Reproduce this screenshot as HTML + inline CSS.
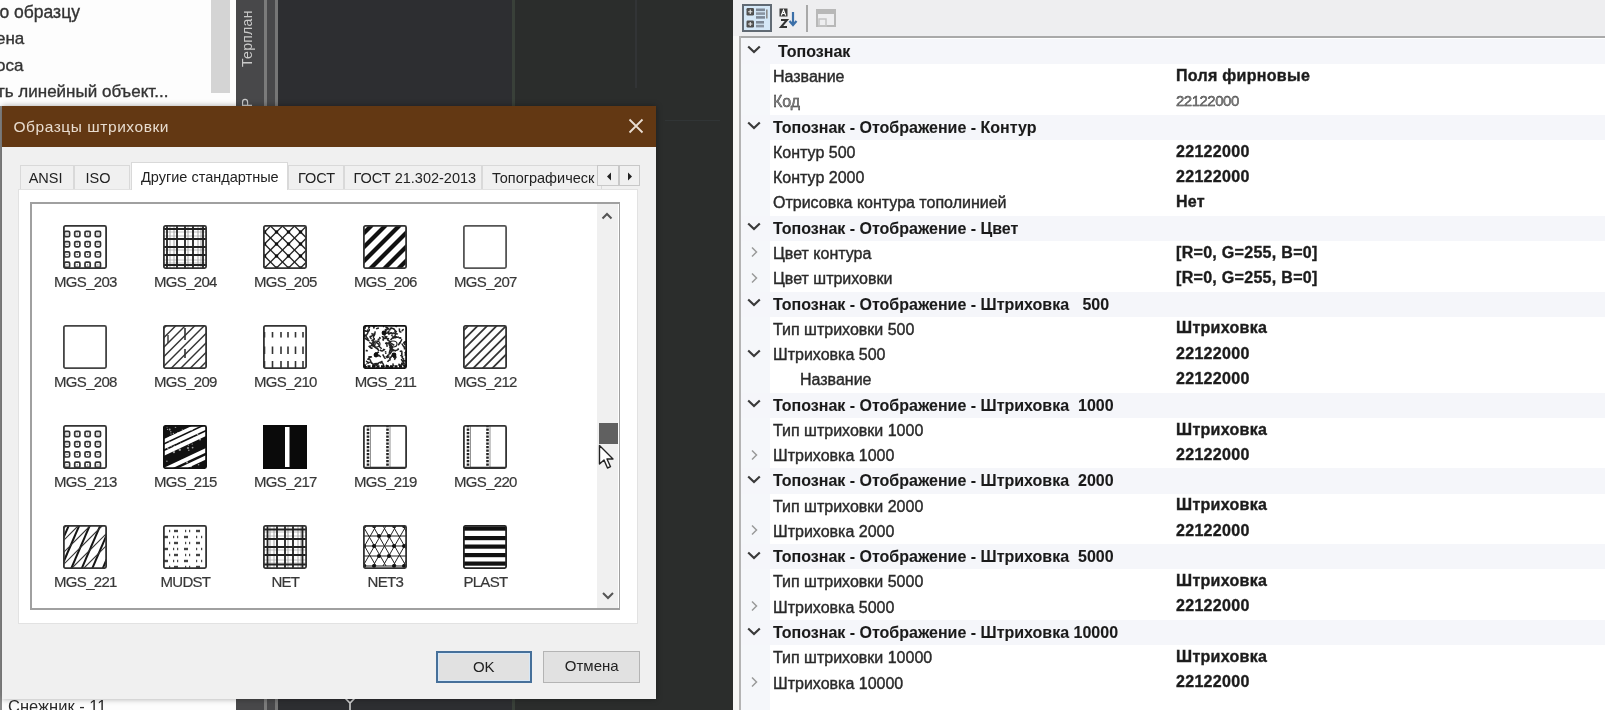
<!DOCTYPE html>
<html><head><meta charset="utf-8">
<style>
*{box-sizing:border-box;margin:0;padding:0}
html,body{width:1605px;height:710px;overflow:hidden;background:#2d2f31;font-family:"Liberation Sans",sans-serif;position:relative}
#wrap{position:absolute;left:0;top:0;width:1605px;height:710px;overflow:hidden;filter:blur(0.45px)}
.a{position:absolute}
.t{position:absolute;white-space:nowrap}
/* left panel */
#lp{left:0;top:0;width:236px;height:710px;background:#fdfdfd}
#lpsb{left:211px;top:0;width:19px;height:93px;background:#d4d4d4}
#lptxt div{position:absolute;left:-3px;font-size:17px;color:#333;-webkit-text-stroke:0.35px #333;white-space:nowrap}
#strip{left:236px;top:0;width:42px;height:710px;background:#48484a}
#canvas{left:278px;top:0;width:455px;height:710px;background:linear-gradient(90deg,#2d2e31 0,#2d2e31 234px,#2b2d2c 234px)}
/* property panel */
#rs{left:733px;top:0;width:7px;height:710px;background:#f6f6f6}
#pp{left:740px;top:0;width:865px;height:710px;background:#fff}
#tb{left:733px;top:0;width:872px;height:36px;background:#eeeef0}
.row{position:absolute;left:741px;width:864px;height:25.27px;line-height:25.27px;font-size:16px;color:#2a2a2a;-webkit-text-stroke:0.4px #2a2a2a}
.row.cat{background:#f5f6fa;font-weight:bold;color:#1a1a1a;-webkit-text-stroke:0.1px #1a1a1a}
.nm{position:absolute;left:32px;top:0;white-space:nowrap}
.val{position:absolute;left:435px;top:-1.3px;white-space:nowrap;font-weight:bold;color:#1a1a1a;letter-spacing:0.3px}
.chev{position:absolute;left:6px;top:6.5px;width:14px;height:10px}
/* dialog */
#dlg{left:2px;top:106px;width:654px;height:592.5px;background:#f0f0f0;box-shadow:0 0 6px rgba(0,0,0,.35)}
#title{left:0;top:0;width:654px;height:41px;background:#633813}
#ttext{left:11.5px;top:12px;font-size:15.5px;color:#e8dccf;letter-spacing:0.55px}
.tab{position:absolute;top:59px;height:24px;background:#f0f0f0;border:1px solid #d9d9d9;border-bottom:none;font-size:14.5px;color:#222;line-height:25px;text-align:left}
.tab.sel{top:56px;height:28px;background:#fff;line-height:28px;border-color:#d9d9d9}
#page{left:16px;top:83px;width:620px;height:435px;background:#fff;border:1px solid #e2e2e2}
#lb{left:28px;top:96px;width:590px;height:408px;background:#fff;border:1px solid #a0a0a0;border-width:2px 1px 2px 2px}
#sb{left:595px;top:98px;width:21px;height:404px;background:#f0f0f0}
.it{position:absolute;width:100px;height:100px}
.it svg{position:absolute;left:33px;top:0}
.it .lbl{position:absolute;left:5px;width:100px;top:48.6px;line-height:16px;text-align:center;font-size:15px;letter-spacing:-0.7px;color:#383838;-webkit-text-stroke:0.2px #383838}
.btn{position:absolute;top:545px;height:32px;background:#e1e1e1;border:1px solid #b4b4b4;font-size:15px;color:#222;text-align:center;line-height:28px}
.spin{background:#f0f0f0;border:1px solid #c8c8c8}
</style></head><body><div id="wrap">
<div id="lp" class="a"></div>
<div id="lpsb" class="a"></div>
<div id="lptxt" class="a" style="left:0;top:0">
  <div style="top:2px;left:-0.5px;font-size:17.5px">о образцу</div>
  <div style="top:29px;left:-4px">ена</div>
  <div style="top:55.5px;left:-4px">оса</div>
  <div style="top:82px">ть линейный объект...</div>
</div>
<div id="strip" class="a"></div>
<div class="a" style="left:264px;top:0;width:3px;height:710px;background:#7b7b7b"></div>
<div class="a" style="left:275px;top:0;width:3px;height:710px;background:#767676"></div>
<div class="t" style="left:238.5px;top:67px;transform:rotate(-90deg);transform-origin:0 0;font-size:14px;color:#c9c9c9;letter-spacing:0.3px">Терплан</div>
<div class="t" style="left:238.5px;top:150px;transform:rotate(-90deg);transform-origin:0 0;font-size:14px;color:#c9c9c9;width:52px;text-align:right">ЦМР</div>
<div id="canvas" class="a"></div>
<div class="a" style="left:512px;top:0;width:2.5px;height:710px;background:#394039"></div>
<div class="a" style="left:634.5px;top:0;width:2px;height:88px;background:#323436"></div>
<div class="a" style="left:665px;top:120px;width:55px;height:1px;background:#313536"></div>
<svg class="a" style="left:343px;top:697px" width="14" height="14" viewBox="0 0 14 14"><path d="M2 1L7 6L12 1M7 6V14" fill="none" stroke="#cfcfcf" stroke-width="1.6"/></svg>
<div class="t" style="left:8px;top:697px;font-size:16.5px;color:#2a2a2a">Снежник - 11</div>
<div class="a" style="left:0;top:106px;width:2px;height:604px;background:#8a8a8a"></div>
<div id="rs" class="a"></div>
<div id="pp" class="a"></div>
<div id="tb" class="a"></div>
<div class="a" style="left:742px;top:4px;width:30px;height:28px;background:#d5e8f8;border:2px solid #616a74"></div>
<svg class="a" style="left:745px;top:7px" width="24" height="22" viewBox="0 0 24 22"><rect x="1.5" y="1" width="7.5" height="7.5" rx="1.2" fill="#505050"/><path d="M5.25 2.6v4.3M3.1 4.75h4.3" stroke="#e8e8e8" stroke-width="1.1"/><rect x="1.5" y="13.5" width="7.5" height="7" rx="1.2" fill="#505050"/><path d="M3.1 17h4.3M5.25 14.9v4.2" stroke="#e8e8e8" stroke-width="1.1"/><rect x="11" y="1.5" width="9" height="2.6" fill="#7d8896"/><rect x="11" y="5.3" width="9" height="2.6" fill="#8a95a2"/><rect x="11" y="9.1" width="9" height="2.6" fill="#7d8896"/><rect x="11" y="14" width="8" height="2.6" fill="#7d8896"/><rect x="11" y="17.8" width="8" height="2.6" fill="#8a95a2"/><rect x="21" y="2.5" width="1.6" height="9" fill="#8c8c8c"/></svg>
<svg class="a" style="left:777px;top:8px" width="22" height="21" viewBox="0 0 22 21"><rect x="2.5" y="0.5" width="8" height="8" fill="#3a3a3a"/><path d="M4.3 7.5L6.5 2L8.7 7.5M5.2 5.5h2.6" fill="none" stroke="#fff" stroke-width="1.2"/><path d="M4 12h6L4 19h6" fill="none" stroke="#333" stroke-width="2"/><path d="M16 4v13M12.5 13l3.5 4l3.5-4" fill="none" stroke="#3b6fa8" stroke-width="2.2"/></svg>
<div class="a" style="left:806px;top:5px;width:1.5px;height:27px;background:#a8a8a8"></div>
<svg class="a" style="left:816px;top:9px" width="22" height="19" viewBox="0 0 22 19"><rect x="1" y="1" width="18" height="16" fill="none" stroke="#b8b8b8" stroke-width="2"/><rect x="1" y="1" width="18" height="4" fill="#b8b8b8"/><rect x="3" y="10" width="7" height="7" fill="none" stroke="#c4c4c4" stroke-width="1.5"/></svg>
<div class="a" style="left:740px;top:36px;width:865px;height:2px;background:#a9a9a9"></div>
<div class="a" style="left:739px;top:36px;width:1.5px;height:674px;background:#b4b4b4"></div>
<div class="a" style="left:741px;top:38px;width:29px;height:672px;background:#f5f7fa"></div>
<div id="grid2">
<div class="row cat" style="top:38.80px"><svg class="chev" viewBox="0 0 14 10"><path d="M1.2 1.5L7 7L12.8 1.5" fill="none" stroke="#3a3a3a" stroke-width="2.2"/></svg><span class="nm" style="left:37px">Топознак</span></div>
<div class="row" style="top:64.07px"><span class="nm">Название</span><span class="val">Поля фирновые</span></div>
<div class="row" style="top:89.34px"><span class="nm" style="color:#8a8a8a">Код</span><span class="val" style="font-weight:normal;color:#8a8a8a;letter-spacing:-0.5px;font-size:15px">22122000</span></div>
<div class="row cat" style="top:114.61px"><svg class="chev" viewBox="0 0 14 10"><path d="M1.2 1.5L7 7L12.8 1.5" fill="none" stroke="#3a3a3a" stroke-width="2.2"/></svg><span class="nm">Топознак - Отображение - Контур</span></div>
<div class="row" style="top:139.88px"><span class="nm">Контур 500</span><span class="val">22122000</span></div>
<div class="row" style="top:165.15px"><span class="nm">Контур 2000</span><span class="val">22122000</span></div>
<div class="row" style="top:190.42px"><span class="nm">Отрисовка контура тополинией</span><span class="val">Нет</span></div>
<div class="row cat" style="top:215.69px"><svg class="chev" viewBox="0 0 14 10"><path d="M1.2 1.5L7 7L12.8 1.5" fill="none" stroke="#3a3a3a" stroke-width="2.2"/></svg><span class="nm">Топознак - Отображение - Цвет</span></div>
<div class="row" style="top:240.96px"><svg class="chev" viewBox="0 0 14 10"><path d="M5 0.5L9.5 5L5 9.5" fill="none" stroke="#9a9a9a" stroke-width="1.5"/></svg><span class="nm">Цвет контура</span><span class="val">[R=0, G=255, B=0]</span></div>
<div class="row" style="top:266.23px"><svg class="chev" viewBox="0 0 14 10"><path d="M5 0.5L9.5 5L5 9.5" fill="none" stroke="#9a9a9a" stroke-width="1.5"/></svg><span class="nm">Цвет штриховки</span><span class="val">[R=0, G=255, B=0]</span></div>
<div class="row cat" style="top:291.50px"><svg class="chev" viewBox="0 0 14 10"><path d="M1.2 1.5L7 7L12.8 1.5" fill="none" stroke="#3a3a3a" stroke-width="2.2"/></svg><span class="nm">Топознак - Отображение - Штриховка&nbsp;&nbsp; 500</span></div>
<div class="row" style="top:316.77px"><span class="nm">Тип штриховки 500</span><span class="val">Штриховка</span></div>
<div class="row" style="top:342.04px"><svg class="chev" viewBox="0 0 14 10"><path d="M1.2 1.5L7 7L12.8 1.5" fill="none" stroke="#3a3a3a" stroke-width="2.2"/></svg><span class="nm">Штриховка 500</span><span class="val">22122000</span></div>
<div class="row" style="top:367.31px"><span class="nm" style="left:59px">Название</span><span class="val">22122000</span></div>
<div class="row cat" style="top:392.58px"><svg class="chev" viewBox="0 0 14 10"><path d="M1.2 1.5L7 7L12.8 1.5" fill="none" stroke="#3a3a3a" stroke-width="2.2"/></svg><span class="nm">Топознак - Отображение - Штриховка&nbsp; 1000</span></div>
<div class="row" style="top:417.85px"><span class="nm">Тип штриховки 1000</span><span class="val">Штриховка</span></div>
<div class="row" style="top:443.12px"><svg class="chev" viewBox="0 0 14 10"><path d="M5 0.5L9.5 5L5 9.5" fill="none" stroke="#9a9a9a" stroke-width="1.5"/></svg><span class="nm">Штриховка 1000</span><span class="val">22122000</span></div>
<div class="row cat" style="top:468.39px"><svg class="chev" viewBox="0 0 14 10"><path d="M1.2 1.5L7 7L12.8 1.5" fill="none" stroke="#3a3a3a" stroke-width="2.2"/></svg><span class="nm">Топознак - Отображение - Штриховка&nbsp; 2000</span></div>
<div class="row" style="top:493.66px"><span class="nm">Тип штриховки 2000</span><span class="val">Штриховка</span></div>
<div class="row" style="top:518.93px"><svg class="chev" viewBox="0 0 14 10"><path d="M5 0.5L9.5 5L5 9.5" fill="none" stroke="#9a9a9a" stroke-width="1.5"/></svg><span class="nm">Штриховка 2000</span><span class="val">22122000</span></div>
<div class="row cat" style="top:544.20px"><svg class="chev" viewBox="0 0 14 10"><path d="M1.2 1.5L7 7L12.8 1.5" fill="none" stroke="#3a3a3a" stroke-width="2.2"/></svg><span class="nm">Топознак - Отображение - Штриховка&nbsp; 5000</span></div>
<div class="row" style="top:569.47px"><span class="nm">Тип штриховки 5000</span><span class="val">Штриховка</span></div>
<div class="row" style="top:594.74px"><svg class="chev" viewBox="0 0 14 10"><path d="M5 0.5L9.5 5L5 9.5" fill="none" stroke="#9a9a9a" stroke-width="1.5"/></svg><span class="nm">Штриховка 5000</span><span class="val">22122000</span></div>
<div class="row cat" style="top:620.01px"><svg class="chev" viewBox="0 0 14 10"><path d="M1.2 1.5L7 7L12.8 1.5" fill="none" stroke="#3a3a3a" stroke-width="2.2"/></svg><span class="nm">Топознак - Отображение - Штриховка 10000</span></div>
<div class="row" style="top:645.28px"><span class="nm">Тип штриховки 10000</span><span class="val">Штриховка</span></div>
<div class="row" style="top:670.55px"><svg class="chev" viewBox="0 0 14 10"><path d="M5 0.5L9.5 5L5 9.5" fill="none" stroke="#9a9a9a" stroke-width="1.5"/></svg><span class="nm">Штриховка 10000</span><span class="val">22122000</span></div>
</div>


<div id="dlg" class="a">
  <div id="title" class="a"><span id="ttext" class="t">Образцы штриховки</span>
    <svg class="a" style="left:626px;top:11.5px" width="16" height="16" viewBox="0 0 16 16"><path d="M1.5 1.5L14.5 14.5M14.5 1.5L1.5 14.5" stroke="#e9ddd2" stroke-width="1.8"/></svg>
  </div>
  <div class="tab" style="left:17.7px;width:54.3px;padding-left:8px">ANSI</div>
  <div class="tab" style="left:72px;width:55.6px;padding-left:10.5px">ISO</div>
  <div class="tab" style="left:286px;width:56px;padding-left:9px">ГОСТ</div>
  <div class="tab" style="left:342px;width:138.4px;padding-left:8.5px">ГОСТ 21.302-2013</div>
  <div class="tab" style="left:480px;width:120px;text-align:left;padding-left:9px;overflow:hidden">Топографическ</div>
  <div id="page" class="a"></div>
  <div class="tab sel" style="left:128.8px;width:157.6px;padding-left:9.2px">Другие стандартные</div>
  <div class="a spin" style="left:595px;top:59px;width:22px;height:21px"><svg width="22" height="21"><path d="M13 6.5L9 10.5L13 14.5Z" fill="#222"/></svg></div>
  <div class="a spin" style="left:617px;top:59px;width:21px;height:21px"><svg width="21" height="21"><path d="M8 6.5L12 10.5L8 14.5Z" fill="#222"/></svg></div>
  <div id="lb" class="a"></div>
  <div id="sb" class="a">
    <svg class="a" style="left:3px;top:7px" width="14" height="10"><path d="M2.5 7.5L7 3L11.5 7.5" fill="none" stroke="#555" stroke-width="2"/></svg>
    <svg class="a" style="left:4px;top:387px" width="14" height="10"><path d="M2 2L7 7L12 2" fill="none" stroke="#555" stroke-width="2"/></svg>
    <div class="a" style="left:2px;top:219px;width:19px;height:21px;background:#606060"></div>
  </div>
  <div class="a" id="grid" style="left:28.4px;top:119.2px">
<div class="it" style="left:0px;top:0px"><svg width="44" height="44" viewBox="0 0 44 44"><rect x="0" y="0" width="44" height="44" fill="#fff"/><clipPath id="c203"><rect x="1" y="1" width="42" height="42"/></clipPath><g clip-path="url(#c203)"><rect x="1.4" y="6.4" width="5.2" height="5.2" rx="1.2" fill="none" stroke="#333" stroke-width="1.7"/><circle cx="4" cy="9" r="0.6" fill="#555"/><rect x="1.4" y="16.599999999999998" width="5.2" height="5.2" rx="1.2" fill="none" stroke="#333" stroke-width="1.7"/><circle cx="4" cy="19.2" r="0.6" fill="#555"/><rect x="1.4" y="26.799999999999997" width="5.2" height="5.2" rx="1.2" fill="none" stroke="#333" stroke-width="1.7"/><circle cx="4" cy="29.4" r="0.6" fill="#555"/><rect x="1.4" y="37.199999999999996" width="5.2" height="5.2" rx="1.2" fill="none" stroke="#333" stroke-width="1.7"/><circle cx="4" cy="39.8" r="0.6" fill="#555"/><rect x="11.700000000000001" y="6.4" width="5.2" height="5.2" rx="1.2" fill="none" stroke="#333" stroke-width="1.7"/><circle cx="14.3" cy="9" r="0.6" fill="#555"/><rect x="11.700000000000001" y="16.599999999999998" width="5.2" height="5.2" rx="1.2" fill="none" stroke="#333" stroke-width="1.7"/><circle cx="14.3" cy="19.2" r="0.6" fill="#555"/><rect x="11.700000000000001" y="26.799999999999997" width="5.2" height="5.2" rx="1.2" fill="none" stroke="#333" stroke-width="1.7"/><circle cx="14.3" cy="29.4" r="0.6" fill="#555"/><rect x="11.700000000000001" y="37.199999999999996" width="5.2" height="5.2" rx="1.2" fill="none" stroke="#333" stroke-width="1.7"/><circle cx="14.3" cy="39.8" r="0.6" fill="#555"/><rect x="22.0" y="6.4" width="5.2" height="5.2" rx="1.2" fill="none" stroke="#333" stroke-width="1.7"/><circle cx="24.6" cy="9" r="0.6" fill="#555"/><rect x="22.0" y="16.599999999999998" width="5.2" height="5.2" rx="1.2" fill="none" stroke="#333" stroke-width="1.7"/><circle cx="24.6" cy="19.2" r="0.6" fill="#555"/><rect x="22.0" y="26.799999999999997" width="5.2" height="5.2" rx="1.2" fill="none" stroke="#333" stroke-width="1.7"/><circle cx="24.6" cy="29.4" r="0.6" fill="#555"/><rect x="22.0" y="37.199999999999996" width="5.2" height="5.2" rx="1.2" fill="none" stroke="#333" stroke-width="1.7"/><circle cx="24.6" cy="39.8" r="0.6" fill="#555"/><rect x="32.3" y="6.4" width="5.2" height="5.2" rx="1.2" fill="none" stroke="#333" stroke-width="1.7"/><circle cx="34.9" cy="9" r="0.6" fill="#555"/><rect x="32.3" y="16.599999999999998" width="5.2" height="5.2" rx="1.2" fill="none" stroke="#333" stroke-width="1.7"/><circle cx="34.9" cy="19.2" r="0.6" fill="#555"/><rect x="32.3" y="26.799999999999997" width="5.2" height="5.2" rx="1.2" fill="none" stroke="#333" stroke-width="1.7"/><circle cx="34.9" cy="29.4" r="0.6" fill="#555"/><rect x="32.3" y="37.199999999999996" width="5.2" height="5.2" rx="1.2" fill="none" stroke="#333" stroke-width="1.7"/><circle cx="34.9" cy="39.8" r="0.6" fill="#555"/></g><rect x="0.9" y="0.9" width="42.2" height="42.2" rx="1.5" fill="none" stroke="#333" stroke-width="1.8"/></svg><div class="lbl">MGS_203</div></div>
<div class="it" style="left:100px;top:0px"><svg width="44" height="44" viewBox="0 0 44 44"><rect x="0" y="0" width="44" height="44" fill="#fff"/><clipPath id="c204"><rect x="1" y="1" width="42" height="42"/></clipPath><g clip-path="url(#c204)"><line x1="7" y1="0" x2="7" y2="44" stroke="#999" stroke-width="0.9"/><line x1="0" y1="7" x2="44" y2="7" stroke="#aaa" stroke-width="0.7"/><line x1="11" y1="0" x2="11" y2="44" stroke="#999" stroke-width="0.9"/><line x1="0" y1="11" x2="44" y2="11" stroke="#aaa" stroke-width="0.7"/><line x1="25" y1="0" x2="25" y2="44" stroke="#999" stroke-width="0.9"/><line x1="0" y1="25" x2="44" y2="25" stroke="#aaa" stroke-width="0.7"/><line x1="35" y1="0" x2="35" y2="44" stroke="#999" stroke-width="0.9"/><line x1="0" y1="35" x2="44" y2="35" stroke="#aaa" stroke-width="0.7"/><line x1="38" y1="0" x2="38" y2="44" stroke="#999" stroke-width="0.9"/><line x1="0" y1="38" x2="44" y2="38" stroke="#aaa" stroke-width="0.7"/><line x1="4" y1="0" x2="4" y2="44" stroke="#222" stroke-width="1.8"/><line x1="0" y1="4" x2="44" y2="4" stroke="#222" stroke-width="1.8"/><line x1="14" y1="0" x2="14" y2="44" stroke="#222" stroke-width="1.8"/><line x1="0" y1="14" x2="44" y2="14" stroke="#222" stroke-width="1.8"/><line x1="22" y1="0" x2="22" y2="44" stroke="#222" stroke-width="1.8"/><line x1="0" y1="22" x2="44" y2="22" stroke="#222" stroke-width="1.8"/><line x1="30" y1="0" x2="30" y2="44" stroke="#222" stroke-width="1.8"/><line x1="0" y1="30" x2="44" y2="30" stroke="#222" stroke-width="1.8"/><line x1="40" y1="0" x2="40" y2="44" stroke="#222" stroke-width="1.8"/><line x1="0" y1="40" x2="44" y2="40" stroke="#222" stroke-width="1.8"/></g><rect x="0.9" y="0.9" width="42.2" height="42.2" rx="1.5" fill="none" stroke="#333" stroke-width="1.8"/></svg><div class="lbl">MGS_204</div></div>
<div class="it" style="left:200px;top:0px"><svg width="44" height="44" viewBox="0 0 44 44"><rect x="0" y="0" width="44" height="44" fill="#fff"/><clipPath id="c205"><rect x="1" y="1" width="42" height="42"/></clipPath><g clip-path="url(#c205)"><line x1="-101.5" y1="50" x2="-51.5" y2="0" stroke="#222" stroke-width="1.3"/><line x1="-65.5" y1="0" x2="-15.5" y2="50" stroke="#222" stroke-width="1.3"/><line x1="-89.5" y1="50" x2="-39.5" y2="0" stroke="#222" stroke-width="1.3"/><line x1="-53.5" y1="0" x2="-3.5" y2="50" stroke="#222" stroke-width="1.3"/><line x1="-77.5" y1="50" x2="-27.5" y2="0" stroke="#222" stroke-width="1.3"/><line x1="-41.5" y1="0" x2="8.5" y2="50" stroke="#222" stroke-width="1.3"/><line x1="-65.5" y1="50" x2="-15.5" y2="0" stroke="#222" stroke-width="1.3"/><line x1="-29.5" y1="0" x2="20.5" y2="50" stroke="#222" stroke-width="1.3"/><line x1="-53.5" y1="50" x2="-3.5" y2="0" stroke="#222" stroke-width="1.3"/><line x1="-17.5" y1="0" x2="32.5" y2="50" stroke="#222" stroke-width="1.3"/><line x1="-41.5" y1="50" x2="8.5" y2="0" stroke="#222" stroke-width="1.3"/><line x1="-5.5" y1="0" x2="44.5" y2="50" stroke="#222" stroke-width="1.3"/><line x1="-29.5" y1="50" x2="20.5" y2="0" stroke="#222" stroke-width="1.3"/><line x1="6.5" y1="0" x2="56.5" y2="50" stroke="#222" stroke-width="1.3"/><line x1="-17.5" y1="50" x2="32.5" y2="0" stroke="#222" stroke-width="1.3"/><line x1="18.5" y1="0" x2="68.5" y2="50" stroke="#222" stroke-width="1.3"/><line x1="-5.5" y1="50" x2="44.5" y2="0" stroke="#222" stroke-width="1.3"/><line x1="30.5" y1="0" x2="80.5" y2="50" stroke="#222" stroke-width="1.3"/><line x1="6.5" y1="50" x2="56.5" y2="0" stroke="#222" stroke-width="1.3"/><line x1="42.5" y1="0" x2="92.5" y2="50" stroke="#222" stroke-width="1.3"/><line x1="18.5" y1="50" x2="68.5" y2="0" stroke="#222" stroke-width="1.3"/><line x1="54.5" y1="0" x2="104.5" y2="50" stroke="#222" stroke-width="1.3"/><line x1="30.5" y1="50" x2="80.5" y2="0" stroke="#222" stroke-width="1.3"/><line x1="66.5" y1="0" x2="116.5" y2="50" stroke="#222" stroke-width="1.3"/><line x1="42.5" y1="50" x2="92.5" y2="0" stroke="#222" stroke-width="1.3"/><line x1="78.5" y1="0" x2="128.5" y2="50" stroke="#222" stroke-width="1.3"/><line x1="54.5" y1="50" x2="104.5" y2="0" stroke="#222" stroke-width="1.3"/><line x1="90.5" y1="0" x2="140.5" y2="50" stroke="#222" stroke-width="1.3"/><circle cx="1.5" cy="7" r="1.8" fill="#111"/><circle cx="1.5" cy="19" r="1.8" fill="#111"/><circle cx="1.5" cy="31" r="1.8" fill="#111"/><circle cx="1.5" cy="43" r="1.8" fill="#111"/><circle cx="13.5" cy="7" r="1.8" fill="#111"/><circle cx="13.5" cy="19" r="1.8" fill="#111"/><circle cx="13.5" cy="31" r="1.8" fill="#111"/><circle cx="13.5" cy="43" r="1.8" fill="#111"/><circle cx="25.5" cy="7" r="1.8" fill="#111"/><circle cx="25.5" cy="19" r="1.8" fill="#111"/><circle cx="25.5" cy="31" r="1.8" fill="#111"/><circle cx="25.5" cy="43" r="1.8" fill="#111"/><circle cx="37.5" cy="7" r="1.8" fill="#111"/><circle cx="37.5" cy="19" r="1.8" fill="#111"/><circle cx="37.5" cy="31" r="1.8" fill="#111"/><circle cx="37.5" cy="43" r="1.8" fill="#111"/></g><rect x="0.9" y="0.9" width="42.2" height="42.2" rx="1.5" fill="none" stroke="#333" stroke-width="1.8"/></svg><div class="lbl">MGS_205</div></div>
<div class="it" style="left:300px;top:0px"><svg width="44" height="44" viewBox="0 0 44 44"><rect x="0" y="0" width="44" height="44" fill="#fff"/><clipPath id="c206"><rect x="1" y="1" width="42" height="42"/></clipPath><g clip-path="url(#c206)"><line x1="-125" y1="50" x2="-75" y2="0" stroke="#111" stroke-width="4.2"/><line x1="-111" y1="50" x2="-61" y2="0" stroke="#111" stroke-width="4.2"/><line x1="-97" y1="50" x2="-47" y2="0" stroke="#111" stroke-width="4.2"/><line x1="-83" y1="50" x2="-33" y2="0" stroke="#111" stroke-width="4.2"/><line x1="-69" y1="50" x2="-19" y2="0" stroke="#111" stroke-width="4.2"/><line x1="-55" y1="50" x2="-5" y2="0" stroke="#111" stroke-width="4.2"/><line x1="-41" y1="50" x2="9" y2="0" stroke="#111" stroke-width="4.2"/><line x1="-27" y1="50" x2="23" y2="0" stroke="#111" stroke-width="4.2"/><line x1="-13" y1="50" x2="37" y2="0" stroke="#111" stroke-width="4.2"/><line x1="1" y1="50" x2="51" y2="0" stroke="#111" stroke-width="4.2"/><line x1="15" y1="50" x2="65" y2="0" stroke="#111" stroke-width="4.2"/><line x1="29" y1="50" x2="79" y2="0" stroke="#111" stroke-width="4.2"/><line x1="43" y1="50" x2="93" y2="0" stroke="#111" stroke-width="4.2"/><line x1="57" y1="50" x2="107" y2="0" stroke="#111" stroke-width="4.2"/></g><rect x="0.9" y="0.9" width="42.2" height="42.2" rx="1.5" fill="none" stroke="#333" stroke-width="1.8"/></svg><div class="lbl">MGS_206</div></div>
<div class="it" style="left:400px;top:0px"><svg width="44" height="44" viewBox="0 0 44 44"><rect x="0" y="0" width="44" height="44" fill="#fff"/><rect x="0.9" y="0.9" width="42.2" height="42.2" rx="1.5" fill="none" stroke="#555" stroke-width="1.8"/></svg><div class="lbl">MGS_207</div></div>
<div class="it" style="left:0px;top:100px"><svg width="44" height="44" viewBox="0 0 44 44"><rect x="0" y="0" width="44" height="44" fill="#fff"/><rect x="0.9" y="0.9" width="42.2" height="42.2" rx="1.5" fill="none" stroke="#444" stroke-width="1.8"/></svg><div class="lbl">MGS_208</div></div>
<div class="it" style="left:100px;top:100px"><svg width="44" height="44" viewBox="0 0 44 44"><rect x="0" y="0" width="44" height="44" fill="#fff"/><clipPath id="c209"><rect x="1" y="1" width="42" height="42"/></clipPath><g clip-path="url(#c209)"><line x1="-103.0" y1="50" x2="-53.0" y2="0" stroke="#333" stroke-width="1.4"/><line x1="-93.5" y1="50" x2="-43.5" y2="0" stroke="#333" stroke-width="1.4"/><line x1="-84.0" y1="50" x2="-34.0" y2="0" stroke="#333" stroke-width="1.4"/><line x1="-74.5" y1="50" x2="-24.5" y2="0" stroke="#333" stroke-width="1.4"/><line x1="-65.0" y1="50" x2="-15.0" y2="0" stroke="#333" stroke-width="1.4"/><line x1="-55.5" y1="50" x2="-5.5" y2="0" stroke="#333" stroke-width="1.4"/><line x1="-46.0" y1="50" x2="4.0" y2="0" stroke="#333" stroke-width="1.4"/><line x1="-36.5" y1="50" x2="13.5" y2="0" stroke="#333" stroke-width="1.4"/><line x1="-27.0" y1="50" x2="23.0" y2="0" stroke="#333" stroke-width="1.4"/><line x1="-17.5" y1="50" x2="32.5" y2="0" stroke="#333" stroke-width="1.4"/><line x1="-8.0" y1="50" x2="42.0" y2="0" stroke="#333" stroke-width="1.4"/><line x1="1.5" y1="50" x2="51.5" y2="0" stroke="#333" stroke-width="1.4"/><line x1="11.0" y1="50" x2="61.0" y2="0" stroke="#333" stroke-width="1.4"/><line x1="20.5" y1="50" x2="70.5" y2="0" stroke="#333" stroke-width="1.4"/><line x1="30.0" y1="50" x2="80.0" y2="0" stroke="#333" stroke-width="1.4"/><line x1="22" y1="3" x2="22" y2="15" stroke="#333" stroke-width="1.6"/><line x1="22" y1="24" x2="22" y2="33" stroke="#333" stroke-width="1.6"/><line x1="5" y1="10" x2="5" y2="18" stroke="#333" stroke-width="1.4"/></g><rect x="0.9" y="0.9" width="42.2" height="42.2" rx="1.5" fill="none" stroke="#333" stroke-width="1.8"/></svg><div class="lbl">MGS_209</div></div>
<div class="it" style="left:200px;top:100px"><svg width="44" height="44" viewBox="0 0 44 44"><rect x="0" y="0" width="44" height="44" fill="#fff"/><clipPath id="c210"><rect x="1" y="1" width="42" height="42"/></clipPath><g clip-path="url(#c210)"><line x1="1.5" y1="7" x2="1.5" y2="12.5" stroke="#333" stroke-width="1.6"/><line x1="1.5" y1="21.5" x2="1.5" y2="29" stroke="#333" stroke-width="1.6"/><line x1="1.5" y1="36" x2="1.5" y2="44" stroke="#333" stroke-width="1.6"/><line x1="9.5" y1="7" x2="9.5" y2="12.5" stroke="#333" stroke-width="1.6"/><line x1="9.5" y1="21.5" x2="9.5" y2="29" stroke="#333" stroke-width="1.6"/><line x1="9.5" y1="36" x2="9.5" y2="44" stroke="#333" stroke-width="1.6"/><line x1="18" y1="7" x2="18" y2="12.5" stroke="#333" stroke-width="1.6"/><line x1="18" y1="21.5" x2="18" y2="29" stroke="#333" stroke-width="1.6"/><line x1="18" y1="36" x2="18" y2="44" stroke="#333" stroke-width="1.6"/><line x1="25" y1="7" x2="25" y2="12.5" stroke="#333" stroke-width="1.6"/><line x1="25" y1="21.5" x2="25" y2="29" stroke="#333" stroke-width="1.6"/><line x1="25" y1="36" x2="25" y2="44" stroke="#333" stroke-width="1.6"/><line x1="32.5" y1="7" x2="32.5" y2="12.5" stroke="#333" stroke-width="1.6"/><line x1="32.5" y1="21.5" x2="32.5" y2="29" stroke="#333" stroke-width="1.6"/><line x1="32.5" y1="36" x2="32.5" y2="44" stroke="#333" stroke-width="1.6"/><line x1="40" y1="7" x2="40" y2="12.5" stroke="#333" stroke-width="1.6"/><line x1="40" y1="21.5" x2="40" y2="29" stroke="#333" stroke-width="1.6"/><line x1="40" y1="36" x2="40" y2="44" stroke="#333" stroke-width="1.6"/></g><rect x="0.9" y="0.9" width="42.2" height="42.2" rx="1.5" fill="none" stroke="#333" stroke-width="1.8"/></svg><div class="lbl">MGS_210</div></div>
<div class="it" style="left:300px;top:100px"><svg width="44" height="44" viewBox="0 0 44 44"><rect x="0" y="0" width="44" height="44" fill="#fff"/><clipPath id="c211"><rect x="1" y="1" width="42" height="42"/></clipPath><g clip-path="url(#c211)"><path d="M20.0 24.5 q3.4 -0.3 0.1 0.7" fill="none" stroke="#222" stroke-width="1.5"/><path d="M8.8 22.5 q1.0 2.3 -3.2 -1.6" fill="none" stroke="#222" stroke-width="1.5"/><path d="M4.8 35.0 q1.5 -3.7 3.9 3.7" fill="none" stroke="#222" stroke-width="1.5"/><path d="M28.5 26.9 q-2.7 -3.9 0.2 -3.5" fill="none" stroke="#222" stroke-width="1.5"/><path d="M9.0 11.2 q-3.8 -0.3 -0.5 2.7" fill="none" stroke="#222" stroke-width="1.5"/><path d="M22.8 27.9 q-0.0 1.3 -0.3 -1.8" fill="none" stroke="#222" stroke-width="1.5"/><path d="M42.9 42.8 q2.7 1.7 -1.5 -2.2" fill="none" stroke="#222" stroke-width="1.5"/><path d="M13.1 3.9 q2.1 -0.8 2.8 -0.9" fill="none" stroke="#222" stroke-width="1.5"/><path d="M41.2 36.6 q-4.0 -2.3 3.3 -0.2" fill="none" stroke="#222" stroke-width="1.5"/><path d="M42.2 17.7 q-3.4 1.0 2.2 -1.8" fill="none" stroke="#222" stroke-width="1.5"/><path d="M4.7 15.0 q3.7 2.1 -3.1 -2.0" fill="none" stroke="#222" stroke-width="1.5"/><path d="M5.2 3.5 q2.4 -2.6 0.5 -0.4" fill="none" stroke="#222" stroke-width="1.5"/><path d="M9.0 31.7 q-3.0 1.1 -3.1 -0.6" fill="none" stroke="#222" stroke-width="1.5"/><path d="M9.9 12.3 q3.8 2.4 -1.6 3.1" fill="none" stroke="#222" stroke-width="1.5"/><path d="M9.8 17.6 q2.8 1.1 -3.2 3.9" fill="none" stroke="#222" stroke-width="1.5"/><path d="M10.0 11.8 q2.2 -1.4 -1.6 -3.4" fill="none" stroke="#222" stroke-width="1.5"/><path d="M4.8 25.5 q-2.1 0.8 -1.0 -0.4" fill="none" stroke="#222" stroke-width="1.5"/><path d="M41.3 21.3 q0.6 2.9 -2.5 -2.8" fill="none" stroke="#222" stroke-width="1.5"/><path d="M39.2 35.3 q-2.0 -2.5 1.9 3.5" fill="none" stroke="#222" stroke-width="1.5"/><path d="M9.3 40.9 q3.1 0.8 -0.6 -3.2" fill="none" stroke="#222" stroke-width="1.5"/><path d="M2.6 41.4 q-2.1 1.6 -1.9 2.6" fill="none" stroke="#222" stroke-width="1.5"/><path d="M26.1 13.3 q-2.6 1.8 -3.4 -2.2" fill="none" stroke="#222" stroke-width="1.5"/><path d="M24.5 36.8 q0.9 -1.8 3.3 -2.4" fill="none" stroke="#222" stroke-width="1.5"/><path d="M1.7 12.3 q-0.4 -3.5 -2.6 -1.0" fill="none" stroke="#222" stroke-width="1.5"/><path d="M25.0 6.5 q-1.1 3.1 3.8 1.3" fill="none" stroke="#222" stroke-width="1.5"/><path d="M30.0 25.5 q-2.9 -3.7 -3.9 3.3" fill="none" stroke="#222" stroke-width="1.5"/><path d="M30.4 41.4 q-3.8 1.1 -0.1 1.8" fill="none" stroke="#222" stroke-width="1.5"/><path d="M14.4 43.0 q-3.4 0.4 1.9 3.2" fill="none" stroke="#222" stroke-width="1.5"/><path d="M32.0 30.6 q2.3 3.3 -1.2 1.5" fill="none" stroke="#222" stroke-width="1.5"/><path d="M38.8 37.6 q-0.7 2.3 2.9 0.6" fill="none" stroke="#222" stroke-width="1.5"/><path d="M27.2 17.1 q0.7 0.9 -3.4 1.1" fill="none" stroke="#222" stroke-width="1.5"/><path d="M42.7 38.0 q1.8 -0.9 1.9 0.6" fill="none" stroke="#222" stroke-width="1.5"/><path d="M19.5 36.2 q-3.3 2.0 -3.8 0.8" fill="none" stroke="#222" stroke-width="1.5"/><path d="M21.2 10.7 q1.6 -0.0 0.9 3.4" fill="none" stroke="#222" stroke-width="1.5"/><path d="M11.7 1.5 q-1.6 1.4 -2.4 -2.6" fill="none" stroke="#222" stroke-width="1.5"/><path d="M39.0 28.7 q-0.5 3.1 -1.4 1.3" fill="none" stroke="#222" stroke-width="1.5"/><path d="M9.3 19.1 q2.4 3.3 3.0 -0.9" fill="none" stroke="#222" stroke-width="1.5"/><path d="M25.5 14.3 q-2.9 -0.0 2.7 2.8" fill="none" stroke="#222" stroke-width="1.5"/><path d="M30.9 40.9 q-1.8 -2.6 -0.4 -1.8" fill="none" stroke="#222" stroke-width="1.5"/><path d="M10.0 18.4 q1.0 -0.0 -1.5 2.7" fill="none" stroke="#222" stroke-width="1.5"/><path d="M42.2 20.0 q-3.4 -3.7 3.0 -3.7" fill="none" stroke="#222" stroke-width="1.5"/><path d="M30.8 25.0 q-1.5 2.3 -3.8 -2.9" fill="none" stroke="#222" stroke-width="1.5"/><path d="M20.1 2.0 q2.6 -2.1 -2.9 -3.6" fill="none" stroke="#222" stroke-width="1.5"/><path d="M27.4 19.8 q1.0 1.2 2.5 3.7" fill="none" stroke="#222" stroke-width="1.5"/><path d="M29.7 9.4 q-0.2 -2.6 -3.9 -0.2" fill="none" stroke="#222" stroke-width="1.5"/><path d="M31.0 8.5 q-1.8 -1.2 1.6 0.2" fill="none" stroke="#222" stroke-width="1.5"/><path d="M26.8 32.8 q-0.9 2.3 3.2 -3.3" fill="none" stroke="#222" stroke-width="1.5"/><path d="M40.2 31.3 q-3.0 -0.4 1.0 3.3" fill="none" stroke="#222" stroke-width="1.5"/><path d="M16.8 24.9 q3.0 2.4 3.6 -0.3" fill="none" stroke="#222" stroke-width="1.5"/><path d="M28.4 9.6 q1.8 2.5 1.1 1.7" fill="none" stroke="#222" stroke-width="1.5"/><path d="M10.0 38.8 q3.8 3.8 0.3 2.3" fill="none" stroke="#222" stroke-width="1.5"/><path d="M14.5 39.2 q2.8 -1.2 -3.3 -0.5" fill="none" stroke="#222" stroke-width="1.5"/><path d="M24.1 33.3 q-0.1 -3.8 2.5 -3.5" fill="none" stroke="#222" stroke-width="1.5"/><path d="M34.6 8.3 q-1.3 2.3 -2.9 -2.8" fill="none" stroke="#222" stroke-width="1.5"/><path d="M22.7 31.4 q2.7 1.5 3.6 -0.1" fill="none" stroke="#222" stroke-width="1.5"/><path d="M40.9 4.6 q-2.2 0.2 -1.7 1.8" fill="none" stroke="#222" stroke-width="1.5"/><path d="M27.8 23.0 q2.7 0.5 -1.5 -1.0" fill="none" stroke="#222" stroke-width="1.5"/><path d="M36.5 38.8 q-2.3 2.8 3.7 0.2" fill="none" stroke="#222" stroke-width="1.5"/><path d="M25.1 9.4 q0.3 0.0 0.8 -3.8" fill="none" stroke="#222" stroke-width="1.5"/><path d="M41.7 22.7 q-0.8 2.4 0.5 -0.1" fill="none" stroke="#222" stroke-width="1.5"/><path d="M30.0 3.8 q0.3 -0.7 3.7 3.4" fill="none" stroke="#222" stroke-width="1.5"/><path d="M12.3 20.9 q-3.0 -0.5 2.5 3.2" fill="none" stroke="#222" stroke-width="1.5"/><path d="M21.0 14.3 q-2.5 0.9 3.4 -3.0" fill="none" stroke="#222" stroke-width="1.5"/><path d="M33.7 2.0 q-2.4 -2.2 1.5 -1.4" fill="none" stroke="#222" stroke-width="1.5"/><path d="M15.9 27.0 q-3.2 1.8 -3.0 0.1" fill="none" stroke="#222" stroke-width="1.5"/><path d="M11.5 9.3 q0.2 -0.5 -1.0 -0.7" fill="none" stroke="#222" stroke-width="1.5"/><path d="M23.2 7.7 q-2.4 1.1 1.1 0.2" fill="none" stroke="#222" stroke-width="1.5"/><path d="M36.8 26.7 q2.9 -2.1 1.9 2.5" fill="none" stroke="#222" stroke-width="1.5"/><path d="M38.9 14.3 q-1.5 3.4 -2.3 4.0" fill="none" stroke="#222" stroke-width="1.5"/><path d="M38.3 6.6 q-2.1 1.8 -1.9 -3.2" fill="none" stroke="#222" stroke-width="1.5"/><path d="M36.0 18.7 q2.3 -3.0 -0.8 1.5" fill="none" stroke="#222" stroke-width="1.5"/><path d="M1.7 9.4 q1.5 3.3 3.7 -3.1" fill="none" stroke="#222" stroke-width="1.5"/><path d="M22.2 32.8 q0.0 1.5 -2.5 -3.4" fill="none" stroke="#222" stroke-width="1.5"/><path d="M5.5 2.6 q0.4 0.1 0.5 -2.8" fill="none" stroke="#222" stroke-width="1.5"/><path d="M8.8 9.6 q2.7 3.9 3.4 -3.2" fill="none" stroke="#222" stroke-width="1.5"/><path d="M3.6 41.0 q-0.3 2.1 -1.4 -0.3" fill="none" stroke="#222" stroke-width="1.5"/><path d="M22.6 19.1 q0.8 -3.9 1.6 2.8" fill="none" stroke="#222" stroke-width="1.5"/><path d="M8.6 20.1 q1.9 -0.8 -2.4 -2.7" fill="none" stroke="#222" stroke-width="1.5"/><path d="M22.5 1.6 q3.1 2.4 1.6 2.9" fill="none" stroke="#222" stroke-width="1.5"/><path d="M27.4 18.0 q0.8 0.0 3.9 2.4" fill="none" stroke="#222" stroke-width="1.5"/><path d="M11.8 39.3 q2.0 2.2 2.5 -0.8" fill="none" stroke="#222" stroke-width="1.5"/><path d="M38.7 38.0 q1.6 2.1 2.1 -0.8" fill="none" stroke="#222" stroke-width="1.5"/><path d="M31.4 4.0 q-1.3 -0.2 -3.9 -1.2" fill="none" stroke="#222" stroke-width="1.5"/><path d="M27.8 27.2 q-2.1 3.6 1.3 -1.3" fill="none" stroke="#222" stroke-width="1.5"/><path d="M28.7 24.9 q0.3 -0.9 4.0 1.1" fill="none" stroke="#222" stroke-width="1.5"/><path d="M30.5 33.0 q3.8 -3.8 0.9 1.9" fill="none" stroke="#222" stroke-width="1.5"/><path d="M11.8 17.9 q-3.6 -2.4 -1.0 -3.2" fill="none" stroke="#222" stroke-width="1.5"/><path d="M11.5 39.0 q0.4 0.1 3.7 0.5" fill="none" stroke="#222" stroke-width="1.5"/><path d="M42.8 27.8 q2.5 -3.4 0.8 2.1" fill="none" stroke="#222" stroke-width="1.5"/><path d="M2.9 40.1 q-2.7 -0.2 -2.6 -0.0" fill="none" stroke="#222" stroke-width="1.5"/><path d="M26.7 3.5 q3.6 -0.6 0.2 0.8" fill="none" stroke="#222" stroke-width="1.5"/><path d="M16.4 13.0 q1.2 0.5 -1.7 1.7" fill="none" stroke="#222" stroke-width="1.5"/><path d="M13.4 1.6 q-2.0 -3.7 -2.7 2.0" fill="none" stroke="#222" stroke-width="1.5"/><path d="M17.4 38.7 q2.0 -3.6 3.9 3.6" fill="none" stroke="#222" stroke-width="1.5"/><path d="M4.1 39.0 q-0.6 -0.2 3.8 -2.1" fill="none" stroke="#222" stroke-width="1.5"/><path d="M23.0 40.4 q1.8 -0.3 3.8 2.5" fill="none" stroke="#222" stroke-width="1.5"/><path d="M26.4 5.8 q1.0 -0.4 -2.4 -3.6" fill="none" stroke="#222" stroke-width="1.5"/><path d="M23.2 6.2 q-0.5 1.3 -0.4 -1.9" fill="none" stroke="#222" stroke-width="1.5"/><path d="M25.5 18.6 q2.2 0.2 4.0 3.6" fill="none" stroke="#222" stroke-width="1.5"/><path d="M31.8 11.0 q-3.1 3.1 2.3 1.0" fill="none" stroke="#222" stroke-width="1.5"/><path d="M16.1 12.4 q1.5 0.5 0.7 1.1" fill="none" stroke="#222" stroke-width="1.5"/><path d="M32.6 9.0 q-2.0 3.8 3.3 3.0" fill="none" stroke="#222" stroke-width="1.5"/><path d="M2.7 3.6 q-1.8 -0.6 1.0 -3.2" fill="none" stroke="#222" stroke-width="1.5"/><path d="M23.7 4.0 q-3.3 1.4 0.4 1.0" fill="none" stroke="#222" stroke-width="1.5"/><path d="M16.7 21.1 q-2.3 -1.3 2.0 2.7" fill="none" stroke="#222" stroke-width="1.5"/><path d="M4.1 6.0 q2.5 1.0 2.2 -2.3" fill="none" stroke="#222" stroke-width="1.5"/><path d="M18.8 11.8 q2.5 -1.0 1.2 3.9" fill="none" stroke="#222" stroke-width="1.5"/><path d="M14.7 24.0 q2.0 3.4 -0.6 -1.0" fill="none" stroke="#222" stroke-width="1.5"/><path d="M5.1 37.8 q-3.4 -3.3 0.5 -0.1" fill="none" stroke="#222" stroke-width="1.5"/><path d="M29.8 13.6 q2.2 -3.4 -2.3 1.3" fill="none" stroke="#222" stroke-width="1.5"/><path d="M4.4 13.8 q1.8 1.6 -1.7 -2.9" fill="none" stroke="#222" stroke-width="1.5"/><path d="M16.0 31.5 q-1.1 -3.1 1.7 0.6" fill="none" stroke="#222" stroke-width="1.5"/><path d="M39.6 40.5 q3.3 -0.5 2.4 -1.6" fill="none" stroke="#222" stroke-width="1.5"/><path d="M14.3 17.8 q3.5 3.2 -2.0 -1.1" fill="none" stroke="#222" stroke-width="1.5"/><path d="M16.4 16.3 q-0.8 -0.9 -2.4 0.5" fill="none" stroke="#222" stroke-width="1.5"/><path d="M34.5 23.7 q2.7 0.5 -2.6 2.1" fill="none" stroke="#222" stroke-width="1.5"/><path d="M38.0 12.8 q-3.8 0.1 0.4 0.5" fill="none" stroke="#222" stroke-width="1.5"/><path d="M41.6 28.4 q2.4 -3.5 0.4 2.3" fill="none" stroke="#222" stroke-width="1.5"/><path d="M4.5 4.4 q1.9 3.2 -3.3 1.1" fill="none" stroke="#222" stroke-width="1.5"/><path d="M7.0 32.3 q1.2 -2.0 -2.2 2.1" fill="none" stroke="#222" stroke-width="1.5"/><circle cx="13" cy="30" r="2.4" fill="#111"/><circle cx="31" cy="30" r="2.4" fill="#111"/><circle cx="21" cy="8" r="2.4" fill="#111"/><ellipse cx="13" cy="19" rx="4" ry="3" fill="none" stroke="#222" stroke-width="1.2"/><ellipse cx="30" cy="19" rx="4" ry="3" fill="none" stroke="#222" stroke-width="1.2"/><line x1="0" y1="41.5" x2="44" y2="41.5" stroke="#111" stroke-width="2.4" stroke-dasharray="3 1.5"/></g><rect x="0.9" y="0.9" width="42.2" height="42.2" rx="1.5" fill="none" stroke="#111" stroke-width="1.8"/></svg><div class="lbl">MGS_211</div></div>
<div class="it" style="left:400px;top:100px"><svg width="44" height="44" viewBox="0 0 44 44"><rect x="0" y="0" width="44" height="44" fill="#fff"/><clipPath id="c212"><rect x="1" y="1" width="42" height="42"/></clipPath><g clip-path="url(#c212)"><line x1="-101.0" y1="50" x2="-51.0" y2="0" stroke="#333" stroke-width="1.8"/><line x1="-91.5" y1="50" x2="-41.5" y2="0" stroke="#333" stroke-width="1.8"/><line x1="-82.0" y1="50" x2="-32.0" y2="0" stroke="#333" stroke-width="1.8"/><line x1="-72.5" y1="50" x2="-22.5" y2="0" stroke="#333" stroke-width="1.8"/><line x1="-63.0" y1="50" x2="-13.0" y2="0" stroke="#333" stroke-width="1.8"/><line x1="-53.5" y1="50" x2="-3.5" y2="0" stroke="#333" stroke-width="1.8"/><line x1="-44.0" y1="50" x2="6.0" y2="0" stroke="#333" stroke-width="1.8"/><line x1="-34.5" y1="50" x2="15.5" y2="0" stroke="#333" stroke-width="1.8"/><line x1="-25.0" y1="50" x2="25.0" y2="0" stroke="#333" stroke-width="1.8"/><line x1="-15.5" y1="50" x2="34.5" y2="0" stroke="#333" stroke-width="1.8"/><line x1="-6.0" y1="50" x2="44.0" y2="0" stroke="#333" stroke-width="1.8"/><line x1="3.5" y1="50" x2="53.5" y2="0" stroke="#333" stroke-width="1.8"/><line x1="13.0" y1="50" x2="63.0" y2="0" stroke="#333" stroke-width="1.8"/><line x1="22.5" y1="50" x2="72.5" y2="0" stroke="#333" stroke-width="1.8"/></g><rect x="0.9" y="0.9" width="42.2" height="42.2" rx="1.5" fill="none" stroke="#333" stroke-width="1.8"/></svg><div class="lbl">MGS_212</div></div>
<div class="it" style="left:0px;top:200px"><svg width="44" height="44" viewBox="0 0 44 44"><rect x="0" y="0" width="44" height="44" fill="#fff"/><clipPath id="c213"><rect x="1" y="1" width="42" height="42"/></clipPath><g clip-path="url(#c213)"><rect x="1.4" y="6.4" width="5.2" height="5.2" rx="1.2" fill="none" stroke="#333" stroke-width="1.7"/><circle cx="4" cy="9" r="0.6" fill="#555"/><rect x="1.4" y="16.599999999999998" width="5.2" height="5.2" rx="1.2" fill="none" stroke="#333" stroke-width="1.7"/><circle cx="4" cy="19.2" r="0.6" fill="#555"/><rect x="1.4" y="26.799999999999997" width="5.2" height="5.2" rx="1.2" fill="none" stroke="#333" stroke-width="1.7"/><circle cx="4" cy="29.4" r="0.6" fill="#555"/><rect x="1.4" y="37.199999999999996" width="5.2" height="5.2" rx="1.2" fill="none" stroke="#333" stroke-width="1.7"/><circle cx="4" cy="39.8" r="0.6" fill="#555"/><rect x="11.700000000000001" y="6.4" width="5.2" height="5.2" rx="1.2" fill="none" stroke="#333" stroke-width="1.7"/><circle cx="14.3" cy="9" r="0.6" fill="#555"/><rect x="11.700000000000001" y="16.599999999999998" width="5.2" height="5.2" rx="1.2" fill="none" stroke="#333" stroke-width="1.7"/><circle cx="14.3" cy="19.2" r="0.6" fill="#555"/><rect x="11.700000000000001" y="26.799999999999997" width="5.2" height="5.2" rx="1.2" fill="none" stroke="#333" stroke-width="1.7"/><circle cx="14.3" cy="29.4" r="0.6" fill="#555"/><rect x="11.700000000000001" y="37.199999999999996" width="5.2" height="5.2" rx="1.2" fill="none" stroke="#333" stroke-width="1.7"/><circle cx="14.3" cy="39.8" r="0.6" fill="#555"/><rect x="22.0" y="6.4" width="5.2" height="5.2" rx="1.2" fill="none" stroke="#333" stroke-width="1.7"/><circle cx="24.6" cy="9" r="0.6" fill="#555"/><rect x="22.0" y="16.599999999999998" width="5.2" height="5.2" rx="1.2" fill="none" stroke="#333" stroke-width="1.7"/><circle cx="24.6" cy="19.2" r="0.6" fill="#555"/><rect x="22.0" y="26.799999999999997" width="5.2" height="5.2" rx="1.2" fill="none" stroke="#333" stroke-width="1.7"/><circle cx="24.6" cy="29.4" r="0.6" fill="#555"/><rect x="22.0" y="37.199999999999996" width="5.2" height="5.2" rx="1.2" fill="none" stroke="#333" stroke-width="1.7"/><circle cx="24.6" cy="39.8" r="0.6" fill="#555"/><rect x="32.3" y="6.4" width="5.2" height="5.2" rx="1.2" fill="none" stroke="#333" stroke-width="1.7"/><circle cx="34.9" cy="9" r="0.6" fill="#555"/><rect x="32.3" y="16.599999999999998" width="5.2" height="5.2" rx="1.2" fill="none" stroke="#333" stroke-width="1.7"/><circle cx="34.9" cy="19.2" r="0.6" fill="#555"/><rect x="32.3" y="26.799999999999997" width="5.2" height="5.2" rx="1.2" fill="none" stroke="#333" stroke-width="1.7"/><circle cx="34.9" cy="29.4" r="0.6" fill="#555"/><rect x="32.3" y="37.199999999999996" width="5.2" height="5.2" rx="1.2" fill="none" stroke="#333" stroke-width="1.7"/><circle cx="34.9" cy="39.8" r="0.6" fill="#555"/></g><rect x="0.9" y="0.9" width="42.2" height="42.2" rx="1.5" fill="none" stroke="#333" stroke-width="1.8"/></svg><div class="lbl">MGS_213</div></div>
<div class="it" style="left:100px;top:200px"><svg width="44" height="44" viewBox="0 0 44 44"><rect x="0" y="0" width="44" height="44" fill="#fff"/><clipPath id="c215"><rect x="1" y="1" width="42" height="42"/></clipPath><g clip-path="url(#c215)"><rect x="0" y="0" width="44" height="44" fill="#111"/><circle cx="15.0" cy="8.0" r="1.0" fill="#9a9a9a"/><circle cx="4.9" cy="23.4" r="0.8" fill="#9a9a9a"/><circle cx="4.3" cy="22.3" r="0.5" fill="#9a9a9a"/><circle cx="19.3" cy="4.8" r="0.6" fill="#9a9a9a"/><circle cx="19.0" cy="35.1" r="0.6" fill="#9a9a9a"/><circle cx="10.9" cy="27.1" r="1.2" fill="#9a9a9a"/><circle cx="25.1" cy="17.9" r="1.2" fill="#9a9a9a"/><circle cx="3.9" cy="36.3" r="0.7" fill="#9a9a9a"/><circle cx="7.8" cy="6.7" r="0.7" fill="#9a9a9a"/><circle cx="34.6" cy="9.2" r="0.9" fill="#9a9a9a"/><circle cx="27.6" cy="16.9" r="0.9" fill="#9a9a9a"/><circle cx="4.5" cy="4.4" r="0.6" fill="#9a9a9a"/><circle cx="29.2" cy="19.1" r="0.7" fill="#9a9a9a"/><circle cx="25.4" cy="20.1" r="0.7" fill="#9a9a9a"/><circle cx="33.8" cy="30.0" r="0.7" fill="#9a9a9a"/><circle cx="25.0" cy="23.0" r="1.1" fill="#9a9a9a"/><circle cx="31.2" cy="13.5" r="1.2" fill="#9a9a9a"/><circle cx="6.7" cy="18.7" r="1.0" fill="#9a9a9a"/><circle cx="8.1" cy="21.6" r="0.5" fill="#9a9a9a"/><circle cx="28.7" cy="32.6" r="0.9" fill="#9a9a9a"/><circle cx="37.0" cy="14.5" r="1.0" fill="#9a9a9a"/><circle cx="25.8" cy="25.2" r="0.8" fill="#9a9a9a"/><circle cx="35.6" cy="39.8" r="0.8" fill="#9a9a9a"/><circle cx="28.6" cy="4.4" r="1.0" fill="#9a9a9a"/><circle cx="27.9" cy="41.7" r="1.1" fill="#9a9a9a"/><circle cx="13.4" cy="17.4" r="1.0" fill="#9a9a9a"/><circle cx="2.9" cy="20.5" r="0.6" fill="#9a9a9a"/><circle cx="6.7" cy="4.4" r="1.0" fill="#9a9a9a"/><circle cx="7.2" cy="11.9" r="0.8" fill="#9a9a9a"/><circle cx="36.9" cy="5.2" r="0.8" fill="#9a9a9a"/><circle cx="24.0" cy="37.3" r="1.1" fill="#9a9a9a"/><circle cx="36.6" cy="13.1" r="0.8" fill="#9a9a9a"/><circle cx="16.4" cy="37.4" r="1.2" fill="#9a9a9a"/><circle cx="8.0" cy="9.0" r="0.7" fill="#9a9a9a"/><circle cx="11.3" cy="21.4" r="0.9" fill="#9a9a9a"/><circle cx="12.5" cy="2.2" r="0.8" fill="#9a9a9a"/><circle cx="16.8" cy="24.7" r="1.2" fill="#9a9a9a"/><circle cx="29.6" cy="22.6" r="0.9" fill="#9a9a9a"/><circle cx="29.0" cy="4.2" r="1.1" fill="#9a9a9a"/><circle cx="33.2" cy="37.0" r="1.1" fill="#9a9a9a"/><circle cx="17.7" cy="18.0" r="0.6" fill="#9a9a9a"/><circle cx="27.4" cy="4.5" r="0.5" fill="#9a9a9a"/><circle cx="10.4" cy="8.5" r="0.7" fill="#9a9a9a"/><circle cx="4.1" cy="2.0" r="0.6" fill="#9a9a9a"/><circle cx="6.1" cy="16.5" r="0.5" fill="#9a9a9a"/><line x1="-2" y1="17.4" x2="46" y2="-5.1" stroke="#fff" stroke-width="3.6"/><line x1="-2" y1="23.4" x2="46" y2="0.9" stroke="#fff" stroke-width="4.2"/><line x1="-2" y1="29.9" x2="46" y2="7.4" stroke="#fff" stroke-width="4.0"/><line x1="-2" y1="46.4" x2="46" y2="23.9" stroke="#fff" stroke-width="4.0"/><line x1="-2" y1="53.4" x2="46" y2="30.9" stroke="#fff" stroke-width="3.8"/></g><rect x="0.9" y="0.9" width="42.2" height="42.2" rx="1.5" fill="none" stroke="#111" stroke-width="1.8"/></svg><div class="lbl">MGS_215</div></div>
<div class="it" style="left:200px;top:200px"><svg width="44" height="44" viewBox="0 0 44 44"><rect x="0" y="0" width="44" height="44" fill="#fff"/><rect x="0" y="0" width="44" height="44" fill="#0a0a0a"/><rect x="22" y="2" width="4.5" height="40" fill="#fff"/><rect x="0.9" y="0.9" width="42.2" height="42.2" rx="1.5" fill="none" stroke="#0a0a0a" stroke-width="1.8"/></svg><div class="lbl">MGS_217</div></div>
<div class="it" style="left:300px;top:200px"><svg width="44" height="44" viewBox="0 0 44 44"><rect x="0" y="0" width="44" height="44" fill="#fff"/><clipPath id="c219"><rect x="1" y="1" width="42" height="42"/></clipPath><g clip-path="url(#c219)"><line x1="5" y1="0" x2="5" y2="44" stroke="#222" stroke-width="2.6" stroke-dasharray="2.2 1.3"/><line x1="7.5" y1="0" x2="7.5" y2="44" stroke="#777" stroke-width="0.8"/><line x1="24.5" y1="0" x2="24.5" y2="44" stroke="#222" stroke-width="2.6" stroke-dasharray="2.2 1.3"/><line x1="27.0" y1="0" x2="27.0" y2="44" stroke="#777" stroke-width="0.8"/><line x1="0" y1="42.5" x2="44" y2="42.5" stroke="#222" stroke-width="1.5"/></g><rect x="0.9" y="0.9" width="42.2" height="42.2" rx="1.5" fill="none" stroke="#333" stroke-width="1.8"/></svg><div class="lbl">MGS_219</div></div>
<div class="it" style="left:400px;top:200px"><svg width="44" height="44" viewBox="0 0 44 44"><rect x="0" y="0" width="44" height="44" fill="#fff"/><clipPath id="c220"><rect x="1" y="1" width="42" height="42"/></clipPath><g clip-path="url(#c220)"><line x1="5" y1="0" x2="5" y2="44" stroke="#222" stroke-width="2.6" stroke-dasharray="2.2 1.3"/><line x1="7.5" y1="0" x2="7.5" y2="44" stroke="#777" stroke-width="0.8"/><line x1="24.5" y1="0" x2="24.5" y2="44" stroke="#222" stroke-width="2.6" stroke-dasharray="2.2 1.3"/><line x1="27.0" y1="0" x2="27.0" y2="44" stroke="#777" stroke-width="0.8"/><line x1="0" y1="42.5" x2="44" y2="42.5" stroke="#222" stroke-width="1.5"/></g><rect x="0.9" y="0.9" width="42.2" height="42.2" rx="1.5" fill="none" stroke="#333" stroke-width="1.8"/></svg><div class="lbl">MGS_220</div></div>
<div class="it" style="left:0px;top:300px"><svg width="44" height="44" viewBox="0 0 44 44"><rect x="0" y="0" width="44" height="44" fill="#fff"/><clipPath id="c221"><rect x="1" y="1" width="42" height="42"/></clipPath><g clip-path="url(#c221)"><line x1="-25.5" y1="0" x2="-44.5" y2="44" stroke="#151515" stroke-width="2"/><line x1="-15.0" y1="0" x2="-34.0" y2="44" stroke="#151515" stroke-width="2"/><line x1="-4.5" y1="0" x2="-23.5" y2="44" stroke="#151515" stroke-width="2"/><line x1="6.0" y1="0" x2="-13.0" y2="44" stroke="#151515" stroke-width="2"/><line x1="16.5" y1="0" x2="-2.5" y2="44" stroke="#151515" stroke-width="2"/><line x1="27.0" y1="0" x2="8.0" y2="44" stroke="#151515" stroke-width="2"/><line x1="37.5" y1="0" x2="18.5" y2="44" stroke="#151515" stroke-width="2"/><line x1="48.0" y1="0" x2="29.0" y2="44" stroke="#151515" stroke-width="2"/><line x1="58.5" y1="0" x2="39.5" y2="44" stroke="#151515" stroke-width="2"/><line x1="69.0" y1="0" x2="50.0" y2="44" stroke="#151515" stroke-width="2"/><line x1="-2" y1="-18" x2="-18" y2="-2" stroke="#333" stroke-width="1.2"/><line x1="-2" y1="-6" x2="-6" y2="-2" stroke="#333" stroke-width="1.2"/><line x1="-2" y1="6" x2="6" y2="-2" stroke="#333" stroke-width="1.2"/><line x1="-2" y1="18" x2="18" y2="-2" stroke="#333" stroke-width="1.2"/><line x1="-2" y1="30" x2="30" y2="-2" stroke="#333" stroke-width="1.2"/><line x1="-2" y1="42" x2="42" y2="-2" stroke="#333" stroke-width="1.2"/><line x1="-2" y1="54" x2="54" y2="-2" stroke="#333" stroke-width="1.2"/><line x1="-2" y1="66" x2="66" y2="-2" stroke="#333" stroke-width="1.2"/></g><rect x="0.9" y="0.9" width="42.2" height="42.2" rx="1.5" fill="none" stroke="#333" stroke-width="1.8"/></svg><div class="lbl">MGS_221</div></div>
<div class="it" style="left:100px;top:300px"><svg width="44" height="44" viewBox="0 0 44 44"><rect x="0" y="0" width="44" height="44" fill="#fff"/><clipPath id="cmud"><rect x="1" y="1" width="42" height="42"/></clipPath><g clip-path="url(#cmud)"><rect x="6" y="4.8" width="1.2" height="2.4" fill="#444"/><rect x="11" y="4.8" width="4" height="2.4" fill="#444"/><rect x="22" y="4.8" width="1.2" height="2.4" fill="#444"/><rect x="26" y="4.8" width="1.2" height="2.4" fill="#444"/><rect x="33" y="4.8" width="4" height="2.4" fill="#444"/><rect x="1" y="10.8" width="4" height="2.4" fill="#444"/><rect x="10" y="10.8" width="1.2" height="2.4" fill="#444"/><rect x="14" y="10.8" width="1.2" height="2.4" fill="#444"/><rect x="21" y="10.8" width="4" height="2.4" fill="#444"/><rect x="33" y="10.8" width="1.2" height="2.4" fill="#444"/><rect x="38" y="10.8" width="1.2" height="2.4" fill="#444"/><rect x="6" y="16.8" width="1.2" height="2.4" fill="#444"/><rect x="11" y="16.8" width="4" height="2.4" fill="#444"/><rect x="22" y="16.8" width="1.2" height="2.4" fill="#444"/><rect x="26" y="16.8" width="1.2" height="2.4" fill="#444"/><rect x="33" y="16.8" width="4" height="2.4" fill="#444"/><rect x="1" y="22.8" width="4" height="2.4" fill="#444"/><rect x="10" y="22.8" width="1.2" height="2.4" fill="#444"/><rect x="14" y="22.8" width="1.2" height="2.4" fill="#444"/><rect x="21" y="22.8" width="4" height="2.4" fill="#444"/><rect x="33" y="22.8" width="1.2" height="2.4" fill="#444"/><rect x="38" y="22.8" width="1.2" height="2.4" fill="#444"/><rect x="6" y="28.8" width="1.2" height="2.4" fill="#444"/><rect x="11" y="28.8" width="4" height="2.4" fill="#444"/><rect x="22" y="28.8" width="1.2" height="2.4" fill="#444"/><rect x="26" y="28.8" width="1.2" height="2.4" fill="#444"/><rect x="33" y="28.8" width="4" height="2.4" fill="#444"/><rect x="1" y="34.8" width="4" height="2.4" fill="#444"/><rect x="10" y="34.8" width="1.2" height="2.4" fill="#444"/><rect x="14" y="34.8" width="1.2" height="2.4" fill="#444"/><rect x="21" y="34.8" width="4" height="2.4" fill="#444"/><rect x="33" y="34.8" width="1.2" height="2.4" fill="#444"/><rect x="38" y="34.8" width="1.2" height="2.4" fill="#444"/><rect x="6" y="40.8" width="1.2" height="2.4" fill="#444"/><rect x="11" y="40.8" width="4" height="2.4" fill="#444"/><rect x="22" y="40.8" width="1.2" height="2.4" fill="#444"/><rect x="26" y="40.8" width="1.2" height="2.4" fill="#444"/><rect x="33" y="40.8" width="4" height="2.4" fill="#444"/></g><rect x="0.9" y="0.9" width="42.2" height="42.2" rx="1.5" fill="none" stroke="#333" stroke-width="1.8"/></svg><div class="lbl">MUDST</div></div>
<div class="it" style="left:200px;top:300px"><svg width="44" height="44" viewBox="0 0 44 44"><rect x="0" y="0" width="44" height="44" fill="#fff"/><clipPath id="cnet"><rect x="1" y="1" width="42" height="42"/></clipPath><g clip-path="url(#cnet)"><line x1="7" y1="0" x2="7" y2="44" stroke="#999" stroke-width="0.9"/><line x1="0" y1="7" x2="44" y2="7" stroke="#aaa" stroke-width="0.7"/><line x1="11" y1="0" x2="11" y2="44" stroke="#999" stroke-width="0.9"/><line x1="0" y1="11" x2="44" y2="11" stroke="#aaa" stroke-width="0.7"/><line x1="25" y1="0" x2="25" y2="44" stroke="#999" stroke-width="0.9"/><line x1="0" y1="25" x2="44" y2="25" stroke="#aaa" stroke-width="0.7"/><line x1="35" y1="0" x2="35" y2="44" stroke="#999" stroke-width="0.9"/><line x1="0" y1="35" x2="44" y2="35" stroke="#aaa" stroke-width="0.7"/><line x1="38" y1="0" x2="38" y2="44" stroke="#999" stroke-width="0.9"/><line x1="0" y1="38" x2="44" y2="38" stroke="#aaa" stroke-width="0.7"/><line x1="4.5" y1="0" x2="4.5" y2="44" stroke="#222" stroke-width="1.8"/><line x1="0" y1="4.5" x2="44" y2="4.5" stroke="#222" stroke-width="1.8"/><line x1="14" y1="0" x2="14" y2="44" stroke="#222" stroke-width="1.8"/><line x1="0" y1="14" x2="44" y2="14" stroke="#222" stroke-width="1.8"/><line x1="22" y1="0" x2="22" y2="44" stroke="#222" stroke-width="1.8"/><line x1="0" y1="22" x2="44" y2="22" stroke="#222" stroke-width="1.8"/><line x1="30" y1="0" x2="30" y2="44" stroke="#222" stroke-width="1.8"/><line x1="0" y1="30" x2="44" y2="30" stroke="#222" stroke-width="1.8"/><line x1="39.5" y1="0" x2="39.5" y2="44" stroke="#222" stroke-width="1.8"/><line x1="0" y1="39.5" x2="44" y2="39.5" stroke="#222" stroke-width="1.8"/></g><rect x="0.9" y="0.9" width="42.2" height="42.2" rx="1.5" fill="none" stroke="#333" stroke-width="1.8"/></svg><div class="lbl">NET</div></div>
<div class="it" style="left:300px;top:300px"><svg width="44" height="44" viewBox="0 0 44 44"><rect x="0" y="0" width="44" height="44" fill="#fff"/><clipPath id="cnet3"><rect x="1" y="1" width="42" height="42"/></clipPath><g clip-path="url(#cnet3)"><line x1="0" y1="1" x2="44" y2="1" stroke="#222" stroke-width="1.1"/><line x1="0" y1="11" x2="44" y2="11" stroke="#222" stroke-width="1.1"/><line x1="0" y1="21" x2="44" y2="21" stroke="#222" stroke-width="1.1"/><line x1="0" y1="31" x2="44" y2="31" stroke="#222" stroke-width="1.1"/><line x1="0" y1="41" x2="44" y2="41" stroke="#222" stroke-width="1.1"/><line x1="-60" y1="1" x2="-37" y2="41" stroke="#222" stroke-width="1"/><line x1="-37" y1="1" x2="-60" y2="41" stroke="#222" stroke-width="1"/><line x1="-50" y1="1" x2="-27" y2="41" stroke="#222" stroke-width="1"/><line x1="-27" y1="1" x2="-50" y2="41" stroke="#222" stroke-width="1"/><line x1="-40" y1="1" x2="-17" y2="41" stroke="#222" stroke-width="1"/><line x1="-17" y1="1" x2="-40" y2="41" stroke="#222" stroke-width="1"/><line x1="-30" y1="1" x2="-7" y2="41" stroke="#222" stroke-width="1"/><line x1="-7" y1="1" x2="-30" y2="41" stroke="#222" stroke-width="1"/><line x1="-20" y1="1" x2="3" y2="41" stroke="#222" stroke-width="1"/><line x1="3" y1="1" x2="-20" y2="41" stroke="#222" stroke-width="1"/><line x1="-10" y1="1" x2="13" y2="41" stroke="#222" stroke-width="1"/><line x1="13" y1="1" x2="-10" y2="41" stroke="#222" stroke-width="1"/><line x1="0" y1="1" x2="23" y2="41" stroke="#222" stroke-width="1"/><line x1="23" y1="1" x2="0" y2="41" stroke="#222" stroke-width="1"/><line x1="10" y1="1" x2="33" y2="41" stroke="#222" stroke-width="1"/><line x1="33" y1="1" x2="10" y2="41" stroke="#222" stroke-width="1"/><line x1="20" y1="1" x2="43" y2="41" stroke="#222" stroke-width="1"/><line x1="43" y1="1" x2="20" y2="41" stroke="#222" stroke-width="1"/><line x1="30" y1="1" x2="53" y2="41" stroke="#222" stroke-width="1"/><line x1="53" y1="1" x2="30" y2="41" stroke="#222" stroke-width="1"/><line x1="40" y1="1" x2="63" y2="41" stroke="#222" stroke-width="1"/><line x1="63" y1="1" x2="40" y2="41" stroke="#222" stroke-width="1"/><line x1="50" y1="1" x2="73" y2="41" stroke="#222" stroke-width="1"/><line x1="73" y1="1" x2="50" y2="41" stroke="#222" stroke-width="1"/><line x1="60" y1="1" x2="83" y2="41" stroke="#222" stroke-width="1"/><line x1="83" y1="1" x2="60" y2="41" stroke="#222" stroke-width="1"/><line x1="70" y1="1" x2="93" y2="41" stroke="#222" stroke-width="1"/><line x1="93" y1="1" x2="70" y2="41" stroke="#222" stroke-width="1"/><circle cx="1" cy="1" r="2" fill="#111"/><circle cx="11" cy="1" r="2" fill="#111"/><circle cx="31" cy="1" r="2" fill="#111"/><circle cx="1" cy="21" r="2" fill="#111"/><circle cx="11" cy="21" r="2" fill="#111"/><circle cx="31" cy="21" r="2" fill="#111"/><circle cx="1" cy="41" r="2" fill="#111"/><circle cx="11" cy="41" r="2" fill="#111"/><circle cx="31" cy="41" r="2" fill="#111"/><circle cx="16" cy="11" r="2" fill="#111"/><circle cx="26" cy="11" r="2" fill="#111"/><circle cx="16" cy="31" r="2" fill="#111"/><circle cx="26" cy="31" r="2" fill="#111"/><circle cx="41" cy="1" r="2" fill="#111"/><circle cx="41" cy="21" r="2" fill="#111"/><circle cx="41" cy="41" r="2" fill="#111"/></g><rect x="0.9" y="0.9" width="42.2" height="42.2" rx="1.5" fill="none" stroke="#333" stroke-width="1.8"/></svg><div class="lbl">NET3</div></div>
<div class="it" style="left:400px;top:300px"><svg width="44" height="44" viewBox="0 0 44 44"><rect x="0" y="0" width="44" height="44" fill="#fff"/><clipPath id="cplast"><rect x="1" y="1" width="42" height="42"/></clipPath><g clip-path="url(#cplast)"><rect x="0" y="1.5" width="44" height="4.2" fill="#111"/><rect x="0" y="11" width="44" height="4.2" fill="#111"/><rect x="0" y="19.5" width="44" height="4.2" fill="#111"/><rect x="0" y="28" width="44" height="4.2" fill="#111"/><rect x="0" y="36.5" width="44" height="4.2" fill="#111"/></g><rect x="0.9" y="0.9" width="42.2" height="42.2" rx="1.5" fill="none" stroke="#222" stroke-width="1.8"/></svg><div class="lbl">PLAST</div></div>
  </div>
  <svg class="a" style="left:596px;top:338px" width="20" height="28" viewBox="0 0 20 28"><path d="M1.5 1.5L1.5 20L6 16L9.5 24L12.5 22.7L9 15L15 15Z" fill="#fff" stroke="#222" stroke-width="1.4" stroke-linejoin="round"/></svg>
  <div class="btn" style="left:433.6px;width:96.4px;border:2px solid #46709a;box-shadow:inset 0 0 0 1px #d6e8f8">OK</div>
  <div class="btn" style="left:541px;width:97.4px">Отмена</div>
</div>
</div></body></html>
